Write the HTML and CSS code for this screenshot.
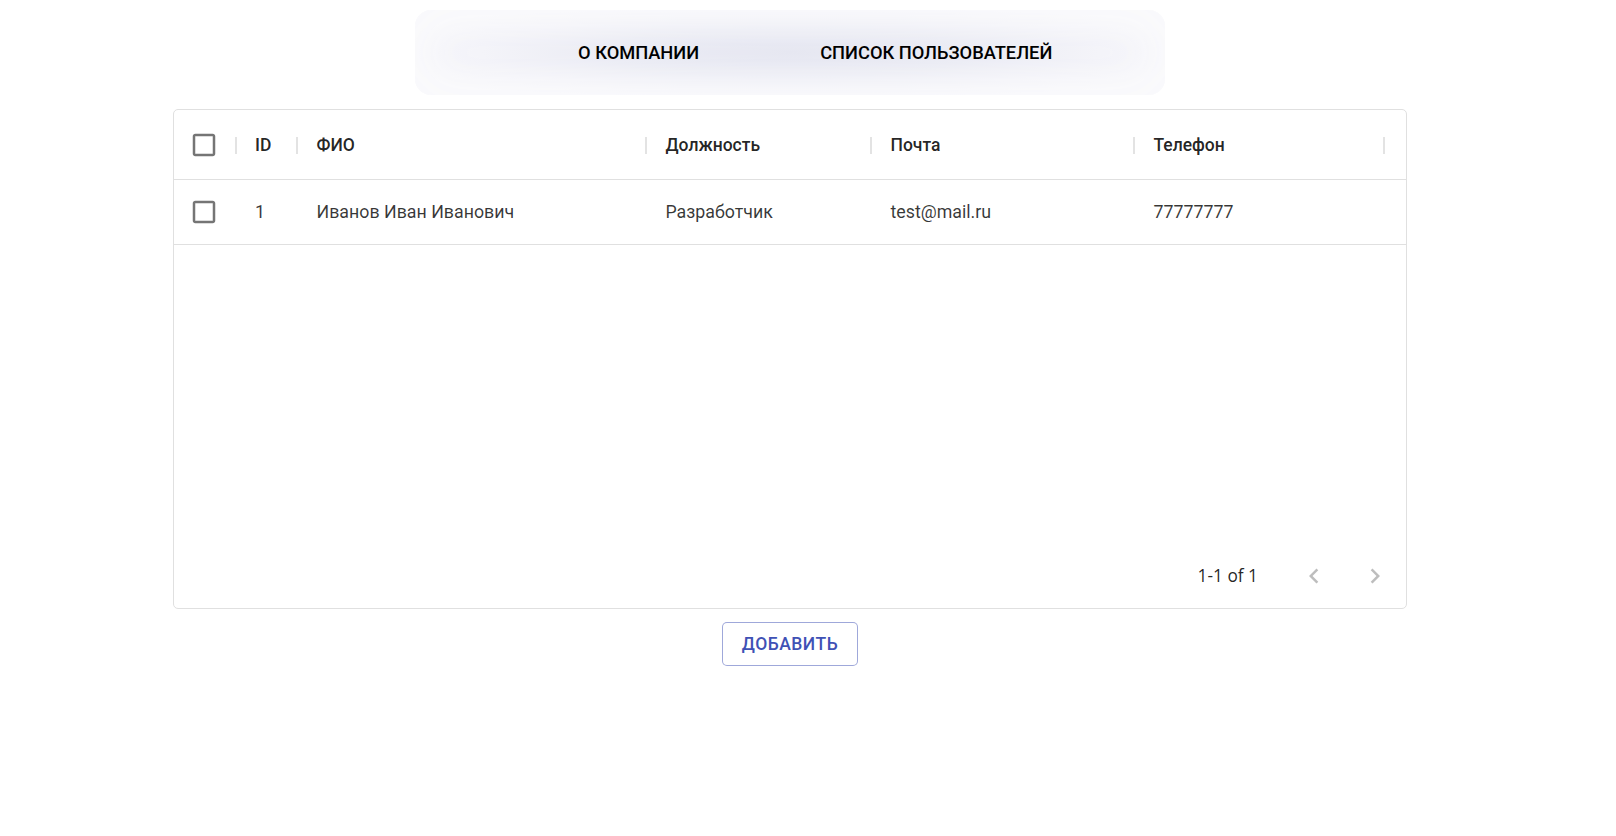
FILE: index.html
```html
<!DOCTYPE html>
<html lang="ru">
<head>
<meta charset="utf-8">
<title>Список пользователей</title>
<link rel="stylesheet" href="styles.css">
</head>
<body>
<div class="page">
  <nav class="nav">
    <a class="nav-link" href="#">О компании</a>
    <a class="nav-link" href="#">Список пользователей</a>
  </nav>

  <div class="grid">
    <div class="grid-head">
      <div class="hcell cell-check sep">
        <svg class="cb" viewBox="0 0 24 24"><path d="M19 5v14H5V5h14m0-2H5c-1.11 0-2 .9-2 2v14c0 1.1.89 2 2 2h14c1.1 0 2-.9 2-2V5c0-1.1-.9-2-2-2z"/></svg>
      </div>
      <div class="hcell sep">ID</div>
      <div class="hcell sep">ФИО</div>
      <div class="hcell sep">Должность</div>
      <div class="hcell sep">Почта</div>
      <div class="hcell sep">Телефон</div>
      <div class="hcell"></div>
    </div>
    <div class="grid-row">
      <div class="cell cell-check">
        <svg class="cb" viewBox="0 0 24 24"><path d="M19 5v14H5V5h14m0-2H5c-1.11 0-2 .9-2 2v14c0 1.1.89 2 2 2h14c1.1 0 2-.9 2-2V5c0-1.1-.9-2-2-2z"/></svg>
      </div>
      <div class="cell">1</div>
      <div class="cell">Иванов Иван Иванович</div>
      <div class="cell">Разработчик</div>
      <div class="cell">test@mail.ru</div>
      <div class="cell">77777777</div>
      <div class="cell"></div>
    </div>
    <div class="grid-spacer"></div>
    <div class="grid-footer">
      <span class="page-info">1-1 of 1</span>
      <div class="page-actions">
        <button class="icon-btn" disabled aria-label="Previous page">
          <svg viewBox="0 0 24 24"><path d="M15.41 7.41L14 6l-6 6 6 6 1.41-1.41L10.83 12z"/></svg>
        </button>
        <button class="icon-btn" disabled aria-label="Next page">
          <svg viewBox="0 0 24 24"><path d="M10 6L8.59 7.41 13.17 12l-4.58 4.59L10 18l6-6z"/></svg>
        </button>
      </div>
    </div>
  </div>

  <button class="add-btn">Добавить</button>
</div>
</body>
</html>
```

FILE: styles.css
```css
* { box-sizing: border-box; }

html, body { background: #fff; }

body {
  margin: 10px 0 0 0;
  font-family: Roboto, "Noto Sans", "Liberation Sans", sans-serif;
  color: rgba(0, 0, 0, 0.87);
}

.page {
  width: 1580px;
  display: flex;
  flex-direction: column;
  align-items: center;
}

.nav {
  width: 750px;
  height: 85px;
  border-radius: 16px;
  background: radial-gradient(ellipse 55% 65% at 50% 50%, #e2e3ef 0%, #e9eaf3 45%, #f2f2f8 75%, #f8f8fb 100%);
  box-shadow: inset 0 0 40px 14px #fafafc;
  display: flex;
  align-items: center;
  padding-left: 163px;
  padding-bottom: 0;
  gap: 121px;
}

.nav-link {
  font-size: 18.3px;
  font-weight: 500;
  text-transform: uppercase;
  color: #000;
  text-decoration: none;
  letter-spacing: 0;
}

.grid {
  margin-top: 14px;
  width: 1234px;
  height: 500px;
  border: 1px solid #e0e0e0;
  border-radius: 5px;
  display: flex;
  flex-direction: column;
  font-size: 17.5px;
}

.grid-head,
.grid-row {
  display: grid;
  grid-template-columns: 61.5px 61.5px 349px 225px 263px 250px 1fr;
  border-bottom: 1px solid #e0e0e0;
}

.grid-head { height: 70px; }
.grid-row { height: 65px; }

.hcell,
.cell {
  display: flex;
  align-items: center;
  padding-left: 19.5px;
  white-space: nowrap;
  position: relative;
}

.hcell { font-weight: 500; color: rgba(0, 0, 0, 0.87); }
.cell { color: rgba(0, 0, 0, 0.78); font-size: 17.8px; padding-bottom: 1px; }

.hcell.sep::after {
  content: "";
  position: absolute;
  right: -1px;
  top: 27px;
  width: 2px;
  height: 17px;
  background: #e3e3e3;
}

.cell-check {
  padding-left: 0;
  padding-right: 2px;
  padding-bottom: 0;
  justify-content: center;
}

.cb {
  width: 30px;
  height: 30px;
  fill: rgba(0, 0, 0, 0.54);
}

.grid-spacer { flex: 1; }

.grid-footer {
  height: 65px;
  display: flex;
  align-items: center;
  justify-content: flex-end;
  padding-right: 1px;
}

.page-info {
  font-family: "Open Sans", "Noto Sans", sans-serif;
  font-size: 17.3px;
  color: rgba(0, 0, 0, 0.87);
}

.page-actions {
  margin-left: 25px;
  display: flex;
}

.icon-btn {
  width: 61px;
  height: 60px;
  padding: 0;
  border: 0;
  background: transparent;
  display: flex;
  align-items: center;
  justify-content: center;
}

.icon-btn svg {
  width: 30px;
  height: 30px;
  fill: rgba(0, 0, 0, 0.26);
}

.add-btn {
  margin-top: 13px;
  width: 136px;
  height: 44px;
  border: 1px solid rgba(63, 81, 181, 0.5);
  border-radius: 5px;
  background: #fff;
  color: #3f51b5;
  font-family: Roboto, "Noto Sans", sans-serif;
  font-size: 17.5px;
  font-weight: 500;
  letter-spacing: 0.5px;
  text-transform: uppercase;
  padding: 0;
}
```
